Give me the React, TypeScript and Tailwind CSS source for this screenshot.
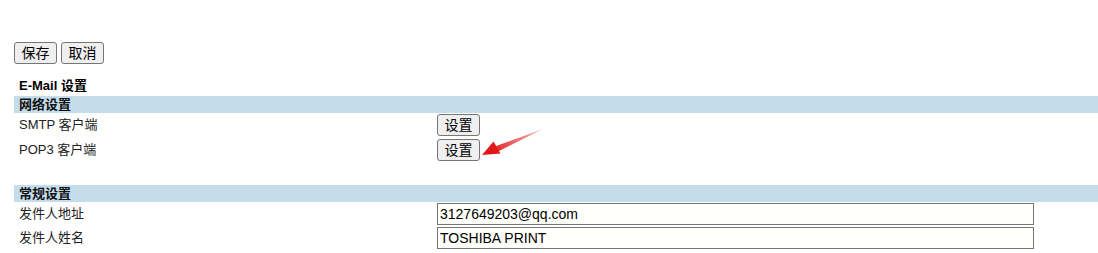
import React from "react";

const font = { fontFamily: '"Liberation Sans", Arial, "Noto Sans CJK SC", sans-serif' };

function Btn({ children }: { children: React.ReactNode }) {
  return (
    <button className="h-[22px] w-[43px] rounded-[3px] border border-[#767676] bg-[#efefef] text-[14px] leading-none text-black">
      {children}
    </button>
  );
}

function Band({ title }: { title: string }) {
  return (
    <div className="h-[17px] bg-[#c5dced] pl-[5px] text-[13px] font-bold leading-[17px] text-[#111]">{title}</div>
  );
}

function Row({ label, children, h = "h-[25px]" }: { label: string; children?: React.ReactNode; h?: string }) {
  return (
    <div className={`flex items-center ${h}`}>
      <div className="w-[423px] pl-[5px] text-[13px] text-[#222]">{label}</div>
      <div className="flex items-center">{children}</div>
    </div>
  );
}

function Field({ value }: { value: string }) {
  return (
    <input
      readOnly
      value={value}
      className="h-[22px] w-[597px] border border-[#767676] bg-[#fffffc] px-[2px] text-[14px] text-black outline-none"
      style={font}
    />
  );
}

export default function App() {
  return (
    <div className="relative h-[253px] w-[1098px] overflow-hidden bg-white pl-[14px]" style={font}>
      <div className="flex gap-[4px] pt-[42px]">
        <Btn>保存</Btn>
        <Btn>取消</Btn>
      </div>
      <div className="mt-[14px] pl-[5px] text-[13px] font-bold leading-[16px] text-black">E-Mail 设置</div>
      <div className="mt-[2px]">
        <Band title="网络设置" />
        <Row label="SMTP 客户端" h="h-[24px]">
          <Btn>设置</Btn>
        </Row>
        <Row label="POP3 客户端" h="h-[25px]">
          <Btn>设置</Btn>
        </Row>
        <div className="h-[23px]" />
        <Band title="常规设置" />
        <Row label="发件人地址" h="h-[24px]">
          <Field value="3127649203@qq.com" />
        </Row>
        <Row label="发件人姓名" h="h-[24px]">
          <Field value="TOSHIBA PRINT" />
        </Row>
        <Row label="附件文件名" h="h-[24px]">
          <span className="ml-[4px] inline-block h-[13px] w-[13px] rounded-full border border-[#767676] bg-white" />
        </Row>
      </div>
      <svg className="pointer-events-none absolute left-0 top-0" width="1098" height="253">
        <defs>
          <linearGradient id="ag" x1="543" y1="129" x2="490" y2="152" gradientUnits="userSpaceOnUse">
            <stop offset="0" stopColor="#e53935" stopOpacity="0.35" />
            <stop offset="1" stopColor="#e01818" />
          </linearGradient>
        </defs>
        <path d="M543 129 L496 146 L498 151.5 Z" fill="url(#ag)" />
        <path d="M482 155 L493.5 141.5 L500.5 153.5 Z" fill="#e01818" />
      </svg>
    </div>
  );
}
